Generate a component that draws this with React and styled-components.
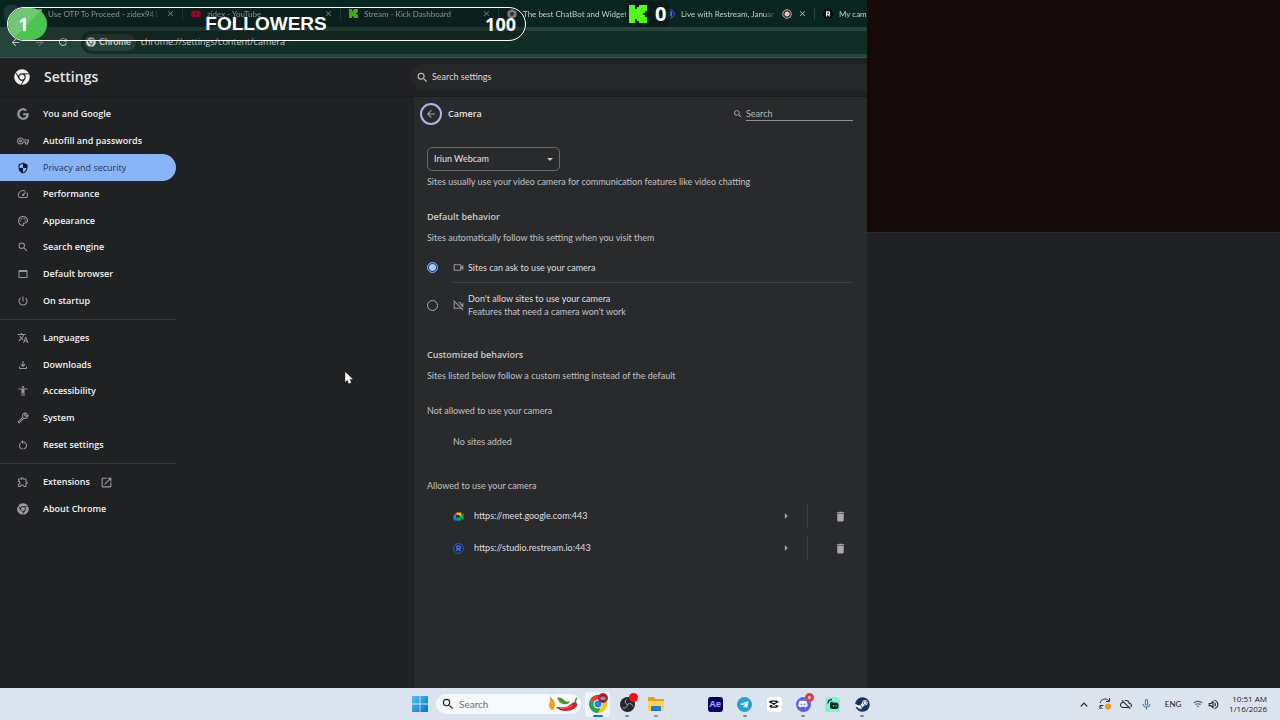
import React from 'react';
import styled, { createGlobalStyle } from 'styled-components';
import {
  MdOutlineVpnKey, MdSecurity, MdOutlineSpeed, MdOutlinePalette, MdSearch, MdOutlineWebAsset,
  MdPowerSettingsNew, MdTranslate, MdOutlineFileDownload, MdAccessibility, MdOutlineBuild,
  MdRestartAlt, MdOutlineExtension, MdOpenInNew, MdArrowBack, MdArrowForward, MdRefresh,
  MdClose, MdOutlineVideocam, MdOutlineVideocamOff, MdDelete, MdArrowRight,
  MdOutlineCloudOff, MdMicNone, MdOutlineWifi, MdOutlineVolumeUp,
} from 'react-icons/md';
import { FaGoogle, FaChrome, FaYoutube, FaTelegramPlane, FaDiscord, FaSteam } from 'react-icons/fa';

const GlobalStyle = createGlobalStyle`
  * {
    box-sizing: border-box;
  }

  body {
    margin: 0;
    background: #202124;
    color: #e3e3e3;
    font-family: Lato, "Noto Sans", sans-serif;
    font-size: 9px;
    line-height: 14px;
  }

  button, input, select {
    font: inherit;
    color: inherit;
  }

  button {
    display: flex;
    align-items: center;
    justify-content: center;
    padding: 0;
    border: 0;
    background: none;
  }

  h1, h2, h3, p, ul {
    margin: 0;
    padding: 0;
  }

  svg {
    display: block;
    flex: none;
  }
`;

const boldFont = '"Open Sans", "Noto Sans", sans-serif';

const mainNav = [
  { label: 'You and Google', icon: FaGoogle },
  { label: 'Autofill and passwords', icon: MdOutlineVpnKey },
  { label: 'Privacy and security', icon: MdSecurity, active: true },
  { label: 'Performance', icon: MdOutlineSpeed },
  { label: 'Appearance', icon: MdOutlinePalette },
  { label: 'Search engine', icon: MdSearch },
  { label: 'Default browser', icon: MdOutlineWebAsset },
  { label: 'On startup', icon: MdPowerSettingsNew },
];

const advancedNav = [
  { label: 'Languages', icon: MdTranslate },
  { label: 'Downloads', icon: MdOutlineFileDownload },
  { label: 'Accessibility', icon: MdAccessibility },
  { label: 'System', icon: MdOutlineBuild, flip: true },
  { label: 'Reset settings', icon: MdRestartAlt },
];

const aboutNav = [
  { label: 'Extensions', icon: MdOutlineExtension, external: true },
  { label: 'About Chrome', icon: FaChrome },
];

const KickLogo = ({ size, color = '#53fc18' }) => (
  <svg width={size} height={size} viewBox="0 0 18 18" fill={color}>
    <path d="M0 0h6v4h2V2h2V0h8v6h-2v2h-2v2h2v2h2v6h-8v-2H8v-2H6v4H0z" />
  </svg>
);

const RestreamLogo = ({ size, ring = '#3565d8', fill = '#12244a', color = '#4a7cf0' }) => (
  <svg width={size} height={size} viewBox="0 0 12 12">
    <circle cx="6" cy="6" r="5.3" fill={fill} stroke={ring} strokeWidth="1" />
    <path d="M4.4 9V3.4h2.2a1.5 1.5 0 0 1 0 3H4.6M6.4 6.4L8 9" fill="none" stroke={color} strokeWidth="1.4" />
  </svg>
);

const WidgetLogo = () => (
  <svg width="10" height="10" viewBox="0 0 10 10">
    <path d="M5 0l4.5 2.5v5L5 10 .5 7.500v-5z" fill="#b9aebb" />
    <circle cx="5" cy="5" r="2" fill="#4b3549" />
  </svg>
);

const MeetLogo = () => (
  <svg width="11" height="11" viewBox="0 0 22 22">
    <path d="M1 9l6-6v6z" fill="#ea4335" />
    <path d="M1 9h5v6H1z" fill="#2684fc" />
    <path d="M1 14h5v-1h8v6H3a2 2 0 0 1-2-2z" fill="#1a73e8" />
    <path d="M7 3h8a2 2 0 0 1 2 2v5h-4V8H7z" fill="#ffba00" />
    <path d="M8 14h5v-4h4v7a2 2 0 0 1-2 2H8z" fill="#00ac47" />
    <path d="M16 9l5-4v13l-5-4z" fill="#1fae4e" />
  </svg>
);

const StartLogo = () => (
  <svg width="16" height="16" viewBox="0 0 16 16">
    <defs>
      <linearGradient id="start" x1="0" y1="0" x2="1" y2="1">
        <stop offset="0" stopColor="#4cc2f1" />
        <stop offset="1" stopColor="#0a74c4" />
      </linearGradient>
    </defs>
    <path d="M0 0h7.600v7.600H0zM8.400 0H16v7.600H8.400zM0 8.400h7.600V16H0zM8.400 8.400H16V16H8.400z" fill="url(#start)" />
  </svg>
);

const Peppers = () => (
  <svg width="31" height="16" viewBox="0 0 31 16">
    <path d="M2 3c2-1 5 1 5 5s-1 6-3 6-3-3-3-5 1-3 1-6z" fill="#eda52c" />
    <path d="M2 1l2 3" stroke="#7d8a33" strokeWidth="1" />
    <path d="M9 2c3-1 5 0 7 2s4 2 6 1c-1 4-6 4-9 2s-2-3-4-5z" fill="#4f8f2f" />
    <path d="M8 11c4 0 6 1 10 0s6-5 9-5c3 1 3 4 0 6-5 4-15 4-19-1z" fill="#cf2121" />
    <path d="M27 7c1-2 0-4 2-5" stroke="#4f8f2f" strokeWidth="1.500" fill="none" />
    <path d="M12 12c5 1 9 0 13-3" stroke="#ef6a5b" strokeWidth="1" fill="none" />
  </svg>
);

const ChromeColor = () => (
  <svg width="18" height="18" viewBox="0 0 18 18">
    <path d="M9 9L1.200 4.500A9 9 0 0 1 16.800 4.500H9z" fill="#e33b2e" />
    <path d="M1.200 4.500A9 9 0 0 0 9 18l3.900-6.700L9 9z" fill="#2ba24c" />
    <path d="M16.800 4.500A9 9 0 0 1 9 18l3.900-6.700V4.500z" fill="#fcc31e" />
    <circle cx="9" cy="9" r="4.500" fill="#fff" />
    <circle cx="9" cy="9" r="3.500" fill="#2f7de1" />
  </svg>
);

const Avatar = () => (
  <svg width="10" height="10" viewBox="0 0 10 10">
    <circle cx="5" cy="5" r="5" fill="#b3263a" />
    <circle cx="5" cy="5" r="2.500" fill="#b98a78" />
    <path d="M2 4.500C2 1 8 1 8 4.500L7 3.500H3z" fill="#2b2432" />
    <path d="M2 9c1-3 5-3 6 0z" fill="#38406b" />
  </svg>
);

const ObsLogo = () => (
  <svg width="15" height="15" viewBox="0 0 16 16">
    <circle cx="8" cy="8" r="8" fill="#26262a" />
    <g fill="none" stroke="#b9b9bd" strokeWidth="1">
      <path d="M8 8C5 7 5 4 7 2.500" />
      <path d="M8 8c2.500-2 5.500-.5 5.700 2" />
      <path d="M8 8c0 3-3 4.500-5 3.500" />
    </g>
  </svg>
);

const FolderLogo = () => (
  <svg width="18" height="16" viewBox="0 0 18 16">
    <path d="M1 2a1 1 0 0 1 1-1h5l2 2h7a1 1 0 0 1 1 1v10H1z" fill="#e3a21a" />
    <path d="M1 5h16v9a1 1 0 0 1-1 1H2a1 1 0 0 1-1-1z" fill="#fbd35a" />
    <path d="M4 15v-4a1 1 0 0 1 1-1h8a1 1 0 0 1 1 1v4z" fill="#1e7fc2" />
  </svg>
);

const CapcutLogo = () => (
  <svg width="10" height="10" viewBox="0 0 20 20" fill="none" stroke="#111" strokeWidth="2.500">
    <path d="M19 5L4 13v3h11v-3L0 5M1 15L4 13M19 15l-4-2M4 7V4h11v3" />
  </svg>
);

const StreamlabsLogo = () => (
  <svg width="12" height="12" viewBox="0 0 24 24">
    <rect x="6" y="9" width="17" height="13" rx="5" fill="#0b2a22" />
    <path d="M2 11c0-5 3-8 8-8M7 13c0-3 1-5 4-5" stroke="#0b2a22" strokeWidth="2.500" fill="none" />
    <path d="M13 14v3M18 14v3" stroke="#80f5d2" strokeWidth="2" />
  </svg>
);

const SyncBadge = () => (
  <svg width="12" height="12" viewBox="0 0 12 12">
    <path d="M1 5a5 5 0 0 1 9-2M10.500 0v3.500H7M1 11V7.500h3.500M1 8l2.500 3" fill="none" stroke="#333" strokeWidth="1" />
    <circle cx="9" cy="8.500" r="3" fill="#f09a1a" />
  </svg>
);

const Pointer = () => (
  <svg width="8" height="12" viewBox="0 0 8 12">
    <path d="M.5.5v9l2-2 1.500 3.800 1.800-.8L4.300 7H7.300z" fill="#fff" stroke="#fff" strokeWidth=".6" />
  </svg>
);

const NavGroup = ({ items }) => (
  <NavList $count={items.length}>
    {items.map(({ label, icon: Icon, active, flip, external }) => (
      <NavItem key={label}>
        <NavLink href="#" $active={active}>
          <NavIcon $active={active} $flip={flip}><Icon size={12} /></NavIcon>
          {label}
          {external && <MdOpenInNew size={13} color="#9a9b9e" />}
        </NavLink>
      </NavItem>
    ))}
  </NavList>
);

const BrowserTab = ({ icon, title, recording }) => (
  <Tab>
    {icon}
    <TabTitle>{title}</TabTitle>
    {recording && (
      <svg width="10" height="10" viewBox="0 0 10 10">
        <circle cx="5" cy="5" r="4.200" fill="none" stroke="#dfb3a6" />
        <circle cx="5" cy="5" r="2.500" fill="#f3c5b8" />
      </svg>
    )}
    <button aria-label={`Close ${title}`}><MdClose size={9} /></button>
  </Tab>
);

const SiteRow = ({ icon, url }) => (
  <Site>
    {icon}
    <SiteUrl>{url}</SiteUrl>
    <RowButton $width={16} aria-label={`Details for ${url}`}><MdArrowRight size={14} /></RowButton>
    <RowDivider />
    <RowButton $width={26} aria-label={`Remove ${url}`}><MdDelete size={13} /></RowButton>
  </Site>
);

const App = () => (
  <Desktop>
    <GlobalStyle />
    <Workspace>
      <Browser>
        <TabStrip>
          <TabSearch aria-label="Search tabs" />
          <BrowserTab icon={<KickLogo size={9} color="#a9d32c" />} title="Use OTP To Proceed - zidex941" />
          <BrowserTab icon={<FaYoutube size={10} color="#d8002f" />} title="zidex - YouTube" />
          <BrowserTab icon={<KickLogo size={9} />} title="Stream - Kick Dashboard" />
          <BrowserTab icon={<WidgetLogo />} title="The best ChatBot and Widgets" />
          <BrowserTab icon={<RestreamLogo size={10} />} title="Live with Restream, January" recording />
          <BrowserTab icon={<RestreamLogo size={10} ring="#000" fill="#000" color="#fff" />} title="My cam" />
        </TabStrip>
        <Toolbar>
          <ToolButton aria-label="Back"><MdArrowBack size={11} /></ToolButton>
          <ToolButton aria-label="Forward" $dim><MdArrowForward size={11} /></ToolButton>
          <ToolButton aria-label="Reload"><MdRefresh size={12} /></ToolButton>
          <AddressBar>
            <SiteChip><FaChrome size={10} />Chrome</SiteChip>
            <AddressInput aria-label="Address" defaultValue="chrome://settings/content/camera" />
          </AddressBar>
        </Toolbar>
        <SettingsHeader>
          <FaChrome size={16} color="#f1f1f1" />
          <SettingsTitle>Settings</SettingsTitle>
          <SettingsSearch>
            <MdSearch size={13} />
            <SearchInput aria-label="Search settings" placeholder="Search settings" />
          </SettingsSearch>
        </SettingsHeader>
        <SettingsBody>
          <Sidebar aria-label="Settings sections">
            <NavGroup items={mainNav} />
            <NavRule />
            <NavGroup items={advancedNav} />
            <NavRule />
            <NavGroup items={aboutNav} />
          </Sidebar>
          <Card>
            <CardHeader>
              <BackButton aria-label="Back to site settings"><MdArrowBack size={12} /></BackButton>
              <CardTitle>Camera</CardTitle>
              <MdSearch size={10} />
              <CardSearch aria-label="Search" placeholder="Search" />
            </CardHeader>
            <CardBody>
              <CameraPicker>
                <CameraSelect aria-label="Camera">
                  <option>Iriun Webcam</option>
                </CameraSelect>
                <SelectArrow viewBox="0 0 6 3"><path d="M0 0h6L3 3z" fill="#c7c7c7" /></SelectArrow>
              </CameraPicker>
              <Description $gap={4}>Sites usually use your video camera for communication features like video chatting</Description>
              <SectionTitle>Default behavior</SectionTitle>
              <Description $gap={7}>Sites automatically follow this setting when you visit them</Description>
              <Options>
                <Option>
                  <Radio type="radio" name="camera" defaultChecked />
                  <OptionContent $height={31} $ruled>
                    <MdOutlineVideocam size={13} />
                    <OptionText>Sites can ask to use your camera</OptionText>
                  </OptionContent>
                </Option>
                <Option>
                  <Radio type="radio" name="camera" />
                  <OptionContent $height={44}>
                    <MdOutlineVideocamOff size={13} />
                    <OptionText>
                      Don't allow sites to use your camera
                      <OptionHint>Features that need a camera won't work</OptionHint>
                    </OptionText>
                  </OptionContent>
                </Option>
              </Options>
              <SectionTitle>Customized behaviors</SectionTitle>
              <Description $gap={7}>Sites listed below follow a custom setting instead of the default</Description>
              <Description as="h3" $gap={21}>Not allowed to use your camera</Description>
              <EmptyNote>No sites added</EmptyNote>
              <Description as="h3" $gap={30}>Allowed to use your camera</Description>
              <SiteList>
                <SiteRow icon={<MeetLogo />} url="https://meet.google.com:443" />
                <SiteRow icon={<RestreamLogo size={11} />} url="https://studio.restream.io:443" />
              </SiteList>
            </CardBody>
          </Card>
        </SettingsBody>
      </Browser>
      <SideColumn>
        <VideoPane />
      </SideColumn>
    </Workspace>

    <Taskbar>
      <span />
      <TaskCenter>
        <StartButton aria-label="Start"><StartLogo /></StartButton>
        <TaskSearch>
          <MdSearch size={14} color="#222" />
          <TaskInput aria-label="Search Windows" placeholder="Search" />
          <Peppers />
        </TaskSearch>
        <TaskApps>
          <TaskButton aria-label="Chrome" $active $open>
            <ChromeColor />
            <Badge><Avatar /></Badge>
          </TaskButton>
          <TaskButton aria-label="OBS Studio" $open>
            <ObsLogo />
            <Badge><RedDot /></Badge>
          </TaskButton>
          <TaskButton aria-label="File Explorer" $open><FolderLogo /></TaskButton>
          <span />
          <TaskButton aria-label="After Effects"><AppTile $bg="#00005b" $color="#a9a4ff">Ae</AppTile></TaskButton>
          <TaskButton aria-label="Telegram" $open>
            <AppTile $bg="#2a9fd0" $color="#fff" $round><FaTelegramPlane size={9} /></AppTile>
          </TaskButton>
          <TaskButton aria-label="CapCut"><AppTile $bg="#fff"><CapcutLogo /></AppTile></TaskButton>
          <TaskButton aria-label="Discord" $open>
            <AppTile $bg="#5a60e8" $color="#fff" $round><FaDiscord size={10} /></AppTile>
            <Badge><RedDot $ring /></Badge>
          </TaskButton>
          <TaskButton aria-label="Streamlabs"><AppTile $bg="#80f5d2"><StreamlabsLogo /></AppTile></TaskButton>
          <TaskButton aria-label="Steam" $open>
            <AppTile $bg="#eef3f8" $color="#123661" $round><FaSteam size={15} /></AppTile>
          </TaskButton>
        </TaskApps>
      </TaskCenter>
      <Tray>
        <TrayButton aria-label="Show hidden icons">
          <svg width="8" height="5" viewBox="0 0 8 5"><path d="M.8 4.300L4 1l3.200 3.300" fill="none" stroke="#222" strokeWidth="1.200" /></svg>
        </TrayButton>
        <TrayButton aria-label="Updates"><SyncBadge /></TrayButton>
        <TrayButton aria-label="OneDrive"><MdOutlineCloudOff size={12} /></TrayButton>
        <TrayButton aria-label="Microphone"><MdMicNone size={13} color="#2d78ad" /></TrayButton>
        <Language>ENG</Language>
        <TrayPair aria-label="Network and volume">
          <MdOutlineWifi size={10} color="#5c6570" />
          <MdOutlineVolumeUp size={13} />
        </TrayPair>
        <Clock>
          <span>10:51 AM</span>
          <span>1/16/2026</span>
        </Clock>
      </Tray>
    </Taskbar>

    <FollowersGoal>
      <GoalCount>1</GoalCount>
      <GoalLabel>FOLLOWERS</GoalLabel>
      <span>100</span>
    </FollowersGoal>
    <KickCounter>
      <KickLogo size={18} />
      0
    </KickCounter>
    <MousePointer><Pointer /></MousePointer>
  </Desktop>
);

const Desktop = styled.div`
  position: relative;
  display: flex;
  flex-direction: column;
  min-height: 100vh;
  overflow: hidden;
`;

const Workspace = styled.div`
  display: flex;
  flex: 1;
`;

const Browser = styled.main`
  flex: 867 1 0;
  min-width: 0;
  display: flex;
  flex-direction: column;
  background: #202123;
`;

const SideColumn = styled.aside`
  flex: 413 1 0;
  background: #202124;
`;

const VideoPane = styled.div`
  height: 233px;
  background: #150a09;
  border-bottom: 1px solid #292a2c;
`;

const TabStrip = styled.header`
  display: flex;
  align-items: center;
  height: 27px;
  overflow: hidden;
  background: #08251f;
  color: #a9b7b3;
`;

const TabSearch = styled.button`
  flex: none;
  width: 17px;
  height: 18px;
  margin: 0 4px;
  border-radius: 6px;
  background: #1b3832;
`;

const Tab = styled.div`
  flex: none;
  display: flex;
  align-items: center;
  gap: 6px;
  width: 158px;
  height: 12px;
  padding: 0 7px 0 8px;
  border-right: 1px solid #28443e;
`;

const TabTitle = styled.span`
  flex: 1;
  overflow: hidden;
  white-space: nowrap;
  color: #c3cfcb;
  font-size: 8px;
  mask-image: linear-gradient(to left, transparent, #000 12px);
`;

const Toolbar = styled.div`
  display: flex;
  align-items: center;
  height: 31px;
  padding-left: 3px;
  background: #24443c;
  color: #c5d1cd;
  border-bottom: 1px solid #35544c;
`;

const ToolButton = styled.button`
  width: 24px;
  height: 24px;
  opacity: ${props => (props.$dim ? 0.4 : 0.9)};
`;

const AddressBar = styled.div`
  flex: 1;
  display: flex;
  align-items: center;
  gap: 5px;
  height: 23px;
  margin-left: 6px;
  padding-left: 3px;
  border-radius: 12px 0 0 12px;
  background: #122c26;
`;

const SiteChip = styled.span`
  display: flex;
  align-items: center;
  gap: 3px;
  height: 17px;
  padding: 0 5px 0 2px;
  border-radius: 9px;
  background: #2b3f3a;
  font-weight: 700;
`;

const AddressInput = styled.input`
  flex: 1;
  min-width: 0;
  padding: 0;
  border: 0;
  background: none;
  outline: none;
  font-family: ${boldFont};
`;

const SettingsHeader = styled.div`
  display: flex;
  align-items: center;
  height: 39px;
  padding-left: 14px;
  border-bottom: 1px solid #1b1c1e;
`;

const SettingsTitle = styled.h1`
  flex: 1;
  margin-left: 14px;
  font-family: ${boldFont};
  font-size: 14px;
  font-weight: 600;
  line-height: 20px;
`;

const SettingsSearch = styled.div`
  display: flex;
  align-items: center;
  gap: 3px;
  width: 456px;
  height: 26px;
  padding-left: 5px;
  border-radius: 13px 0 0 13px;
  background: #262728;
  color: #c7c7c7;
`;

const SearchInput = styled.input`
  flex: 1;
  min-width: 0;
  padding: 0;
  border: 0;
  background: none;

  &::placeholder {
    color: #d8d8d8;
    opacity: 1;
  }
`;

const SettingsBody = styled.div`
  flex: 1;
  display: flex;
  justify-content: space-between;
`;

const Sidebar = styled.nav`
  width: 176px;
  padding-top: 4px;
`;

const NavList = styled.ul`
  display: flex;
  flex-direction: column;
  height: ${props => Math.round((props.$count * 80) / 3)}px;
  list-style: none;
`;

const NavItem = styled.li`
  flex: 1;
  display: flex;
`;

const NavLink = styled.a`
  flex: 1;
  display: flex;
  align-items: center;
  gap: 10px;
  padding-left: 17px;
  border-radius: 0 14px 14px 0;
  background: ${props => (props.$active ? '#8ab4f8' : 'none')};
  color: ${props => (props.$active ? '#1d3660' : '#f1f1f1')};
  font-family: ${boldFont};
  font-weight: ${props => (props.$active ? 500 : 600)};
  text-decoration: none;
`;

const NavIcon = styled.span`
  width: 12px;
  margin-right: 4px;
  color: ${props => (props.$active ? '#0b1a33' : '#9a9b9e')};
  transform: ${props => (props.$flip ? 'scaleX(-1)' : 'none')};
`;

const NavRule = styled.hr`
  height: 1px;
  margin: 5px 0;
  border: 0;
  background: #37383b;
`;

const Card = styled.section`
  width: 453px;
  background: #292a2c;
`;

const CardHeader = styled.div`
  display: flex;
  align-items: center;
  height: 34px;
  padding: 0 14px 0 6px;
  color: #a7a8aa;
`;

const BackButton = styled.button`
  width: 22px;
  height: 22px;
  border: 2px solid #a8b9e8;
  border-radius: 50%;
`;

const CardTitle = styled.h2`
  flex: 1;
  margin-left: 6px;
  color: #e3e3e3;
  font-family: ${boldFont};
  font-size: 9px;
  font-weight: 600;
`;

const CardSearch = styled.input`
  width: 107px;
  height: 13px;
  margin-left: 3px;
  padding: 0;
  border: 0;
  border-bottom: 1px solid #8f9092;
  background: none;

  &::placeholder {
    color: #b4b5b7;
    opacity: 1;
  }
`;

const CardBody = styled.div`
  padding: 16px 14px 0 13px;
`;

const CameraPicker = styled.div`
  position: relative;
  width: 133px;
`;

const CameraSelect = styled.select`
  display: block;
  width: 100%;
  height: 24px;
  padding: 0 6px;
  border: 1px solid #6a6b6e;
  border-radius: 5px;
  background: #292a2c;
  appearance: none;
`;

const SelectArrow = styled.svg`
  position: absolute;
  top: 11px;
  right: 7px;
  width: 6px;
  height: 3px;
  pointer-events: none;
`;

const Description = styled.p`
  margin-top: ${props => props.$gap}px;
  color: #c0c1c3;
  font-size: 9px;
  font-weight: 400;
`;

const SectionTitle = styled.h2`
  margin-top: 21px;
  color: #c9cacc;
  font-family: ${boldFont};
  font-size: 9px;
  font-weight: 600;
`;

const Options = styled.div`
  margin-top: 7px;
`;

const Option = styled.label`
  display: flex;
  align-items: center;
  gap: 14px;
`;

const Radio = styled.input`
  flex: none;
  width: 11px;
  height: 11px;
  margin: 0;
  border: 1px solid #a7a8aa;
  border-radius: 50%;
  appearance: none;

  &:checked {
    border-color: #8ab4f8;
    background: radial-gradient(circle, #a8c7fa 3px, #1d3f7a 4px);
  }
`;

const OptionContent = styled.span`
  flex: 1;
  display: flex;
  align-items: center;
  gap: 3px;
  height: ${props => props.$height}px;
  color: #96979a;
  border-bottom: ${props => (props.$ruled ? '1px solid #3e3f42' : '0')};
`;

const OptionText = styled.span`
  line-height: 13px;
  color: #dedfe1;
`;

const OptionHint = styled.span`
  display: block;
  color: #c3c4c6;
`;

const EmptyNote = styled.p`
  margin-top: 17px;
  padding-left: 26px;
  color: #c0c1c3;
`;

const SiteList = styled.ul`
  margin-top: 7px;
  padding-left: 26px;
  list-style: none;
`;

const Site = styled.li`
  display: flex;
  align-items: center;
  height: 32px;
`;

const SiteUrl = styled.span`
  flex: 1;
  margin-left: 10px;
  color: #dedfe1;
`;

const RowButton = styled.button`
  width: ${props => props.$width}px;
  height: 24px;
  color: #a7a8aa;
`;

const RowDivider = styled.span`
  width: 1px;
  height: 24px;
  margin: 0 19px 0 13px;
  background: #3e3f42;
`;

const Taskbar = styled.footer`
  display: grid;
  grid-template-columns: 1fr auto 1fr;
  align-items: center;
  height: 32px;
  background: #dbe3ee;
  color: #222;
`;

const TaskCenter = styled.div`
  display: flex;
  align-items: center;
`;

const StartButton = styled.button`
  width: 33px;
  height: 24px;
`;

const TaskSearch = styled.div`
  display: flex;
  align-items: center;
  gap: 4px;
  width: 145px;
  height: 20px;
  margin-right: 2px;
  padding: 0 2px 0 5px;
  border-radius: 10px;
  background: #f6f9fd;
`;

const TaskInput = styled.input`
  flex: 1;
  min-width: 0;
  padding: 0;
  border: 0;
  background: none;
  font-size: 10px;

  &::placeholder {
    color: #6a6e74;
    opacity: 1;
  }
`;

const TaskApps = styled.div`
  display: grid;
  grid-template-columns: repeat(10, 1fr);
  justify-items: center;
  width: 294px;
`;

const TaskButton = styled.button`
  position: relative;
  width: 25px;
  height: 25px;
  border-radius: 3px;
  background: ${props => (props.$active ? '#f1f5fa' : 'none')};

  &::after {
    content: '';
    display: ${props => (props.$open ? 'block' : 'none')};
    position: absolute;
    bottom: 0;
    left: 50%;
    width: ${props => (props.$active ? 10 : 4)}px;
    height: 2px;
    border-radius: 1px;
    background: ${props => (props.$active ? '#1273c4' : '#858b93')};
    transform: translateX(-50%);
  }
`;

const Badge = styled.span`
  position: absolute;
  top: 1px;
  right: 2px;
`;

const RedDot = styled.span`
  display: block;
  width: 9px;
  height: 9px;
  border-radius: 50%;
  background: ${props => (props.$ring ? '#f6c9cd' : '#ef1111')};
  border: ${props => (props.$ring ? '3px solid #dc3d4b' : '0')};
`;

const AppTile = styled.span`
  display: flex;
  align-items: center;
  justify-content: center;
  width: 15px;
  height: 15px;
  border-radius: ${props => (props.$round ? '50%' : '3px')};
  background: ${props => props.$bg};
  color: ${props => props.$color};
  font-family: ${boldFont};
  font-size: 9px;
  font-weight: 700;
`;

const Tray = styled.div`
  display: flex;
  align-items: center;
  justify-content: flex-end;
  padding-right: 13px;
`;

const TrayButton = styled.button`
  width: 21px;
  height: 24px;
`;

const Language = styled.span`
  width: 32px;
  text-align: center;
  font-size: 8px;
`;

const TrayPair = styled.button`
  gap: 4px;
  height: 24px;
  margin: 0 9px 0 4px;
`;

const Clock = styled.time`
  display: flex;
  flex-direction: column;
  font-family: ${boldFont};
  font-size: 8px;
  line-height: 10px;
  text-align: right;
`;

const FollowersGoal = styled.div`
  position: absolute;
  top: 7px;
  left: 7px;
  display: flex;
  align-items: center;
  justify-content: space-between;
  width: 519px;
  height: 34px;
  padding-right: 9px;
  border: 1px solid #fff;
  border-radius: 17px;
  background: rgba(16, 24, 24, 0.35);
  color: #fff;
  font-family: ${boldFont};
  font-size: 18px;
  font-weight: 700;
  line-height: 32px;
`;

const GoalCount = styled.span`
  width: 39px;
  height: 32px;
  padding-right: 8px;
  border-radius: 16px;
  background: linear-gradient(135deg, #72c777 48%, #4cc452 52%);
  text-align: center;
`;

const GoalLabel = styled.span`
  font-family: "Liberation Sans", sans-serif;
  font-size: 19px;
`;

const KickCounter = styled.div`
  position: absolute;
  top: 1px;
  left: 626px;
  display: flex;
  align-items: center;
  gap: 8px;
  height: 26px;
  padding: 0 4px 0 3px;
  border-radius: 6px;
  background: rgba(12, 26, 22, 0.85);
  color: #fff;
  font-family: ${boldFont};
  font-size: 20px;
  font-weight: 700;
`;

const MousePointer = styled.div`
  position: absolute;
  top: 372px;
  left: 345px;
`;

export default App;
